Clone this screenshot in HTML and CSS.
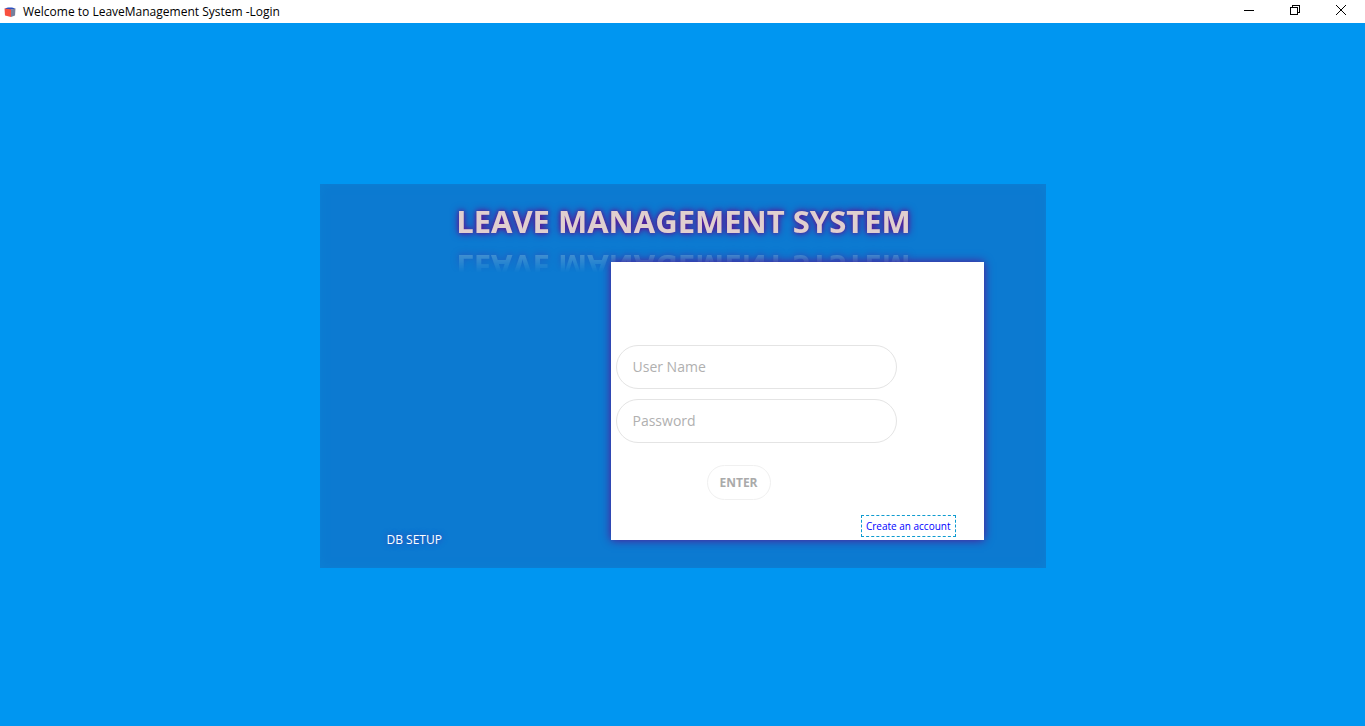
FILE: index.html
```html
<!DOCTYPE html>
<html lang="en">
<head>
<meta charset="utf-8">
<title>Welcome to LeaveManagement System -Login</title>
<link rel="stylesheet" href="styles.css">
</head>
<body class="window">
<header class="titlebar">
  <svg class="app-icon" width="12" height="12" viewBox="0 0 12 12" aria-hidden="true">
    <path fill="#2c4fc0" d="M0.500 2.500 4 1.500h4l3.500 1L6 4z"/>
    <path fill="#f9503f" d="M0.500 2.500 7 3.500V11L1 9.500z"/>
    <path fill="#77809c" d="M11.500 2.500 7 3.500V11l4-1.500z"/>
  </svg>
  <span class="caption">Welcome to LeaveManagement System -Login</span>
  <div class="controls">
    <button class="control" type="button" aria-label="Minimize">
      <svg width="10" height="10" viewBox="0 0 10 10"><path d="M0 5.500h10"/></svg>
    </button>
    <button class="control" type="button" aria-label="Restore">
      <svg width="10" height="10" viewBox="0 0 10 10"><path d="M.5 2.500h7v7h-7zM2.500 2V.5h7v7H8" shape-rendering="crispEdges"/></svg>
    </button>
    <button class="control" type="button" aria-label="Close">
      <svg width="10" height="10" viewBox="0 0 10 10"><path d="M0 0l10 10M10 0L0 10"/></svg>
    </button>
  </div>
</header>
<main class="stage">
  <section class="panel">
    <h1 class="heading">LEAVE MANAGEMENT SYSTEM</h1>
    <div class="content">
      <button class="setup" type="button">DB SETUP</button>
      <form class="card">
        <input class="field" type="text" placeholder="User Name" aria-label="User Name">
        <input class="field" type="password" placeholder="Password" aria-label="Password">
        <button class="enter" type="submit">ENTER</button>
        <a class="signup" href="#">Create an account</a>
      </form>
    </div>
  </section>
</main>
</body>
</html>
```

FILE: styles.css
```css
* { box-sizing: border-box; }

.window {
  margin: 0;
  min-height: 100vh;
  display: flex;
  flex-direction: column;
  background: #0096f1;
  font-family: "Open Sans", "Noto Sans", sans-serif;
}

.titlebar {
  display: flex;
  align-items: center;
  height: 23px;
  padding-left: 4px;
  background: #fff;
}

.app-icon { margin-right: 7px; }

.caption {
  flex: 1;
  font-size: 12px;
  line-height: 16px;
  color: #000;
}

.controls {
  display: flex;
  align-self: flex-start;
  padding-right: 1px;
}

.control {
  display: flex;
  align-items: center;
  justify-content: center;
  width: 46px;
  height: 20px;
  padding: 0;
  border: 0;
  background: none;
}

.control svg { fill: none; stroke: #000; }

.stage {
  flex: 1;
  display: flex;
  align-items: center;
  justify-content: center;
  padding-top: 2px;
}

.panel {
  width: 100%;
  max-width: 726px;
  padding: 14px 62px 28px 64px;
  background: #0c7ad1;
  box-shadow: inset 0 0 10px #0c80d4;
}

.heading {
  margin: 0 0 18px;
  font-size: 31px;
  line-height: 46px;
  font-weight: 700;
  text-align: center;
  color: #e0cfcf;
  text-shadow: 0 0 8px #5a0f90, 0 0 4px #5a1f9a;
  -webkit-box-reflect: below 0 linear-gradient(transparent 38%, rgba(0, 0, 0, 0.4));
}

.content {
  display: flex;
  align-items: flex-end;
  justify-content: space-between;
}

.setup {
  padding: 0 3px;
  margin-bottom: -9px;
  border: 0;
  background: none;
  font: 12px/18px "Open Sans", "Noto Sans", sans-serif;
  color: #fff;
  text-shadow: 0 0 6px #3c35b0;
}

.card {
  position: relative;
  display: flex;
  flex-direction: column;
  align-items: flex-start;
  width: 373px;
  padding: 83px 5px 3px;
  background: #fff;
  box-shadow: 0 0 9px #5a0f90;
}

.field {
  width: 281px;
  height: 44px;
  margin-bottom: 10px;
  padding: 0 16px;
  border: 1px solid #e4e4e4;
  border-radius: 22px;
  background: #fff;
  font: 14px/20px "Open Sans", "Noto Sans", sans-serif;
  color: #555;
}

.field::placeholder { color: #b0b0b0; opacity: 1; }

.enter {
  width: 64px;
  height: 35px;
  margin: 12px 0 15px 91px;
  padding: 2px 0 0;
  border: 1px solid #f0f0f0;
  border-radius: 18px;
  background: #fff;
  font: 700 12px/18px "Open Sans", "Noto Sans", sans-serif;
  color: #aaa;
}

.signup {
  align-self: flex-end;
  margin-right: 23px;
  padding: 0 4px;
  border: 1px dashed #0e9bd0;
  font-size: 10px;
  line-height: 20px;
  color: #00f;
  text-decoration: none;
}
```
